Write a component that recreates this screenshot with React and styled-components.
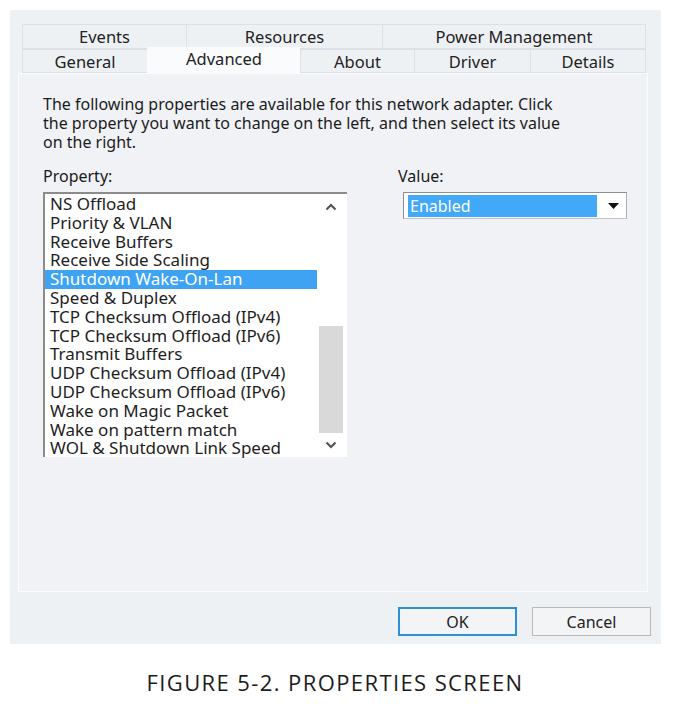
import React from "react";
import styled, { createGlobalStyle } from "styled-components";

const Global = createGlobalStyle`
  html, body { margin: 0; padding: 0; background: #ffffff; }
  body { font-family: "Noto Sans", "Open Sans", sans-serif; }
`;

const Page = styled.div`
  width: 673px;
  height: 709px;
  padding: 10px 12px 0 10px;
  box-sizing: border-box;
  display: flex;
  flex-direction: column;
`;

const Dialog = styled.div`
  width: 651px;
  height: 634px;
  background: #eef1f4;
  box-sizing: border-box;
  padding: 14px 13px 0 8px;
  display: flex;
  flex-direction: column;
  color: #1a1a1a;
  font-size: 16px;
`;

const Tabs = styled.div`
  margin: 0 2px 0 4px;
  display: grid;
  grid-template-rows: 25px 24px;
  position: relative;
  z-index: 1;
  font-size: 16.5px;
`;

const TabRow = styled.div`
  display: grid;
  grid-template-columns: ${(p) => p.$cols};
`;

const Tab = styled.div`
  display: flex;
  align-items: center;
  justify-content: center;
  border: 1px solid #dde1e5;
  border-right: none;
  background: ${(p) => (p.$active ? "#fafbfc" : "#eef1f4")};
  color: #222;
  box-sizing: border-box;
  padding-top: 1px;
  line-height: 20px;
  ${(p) =>
    p.$active
      ? `margin-top: -2px; height: calc(100% + 3px); border-color: #fafbfc; padding-top: 0; padding-bottom: 3px;`
      : ``}
  &:last-child { border-right: 1px solid #dde1e5; }
`;

const Panel = styled.div`
  height: 519px;
  background: #f0f2f5;
  border: 1px solid #fbfcfd;
  box-sizing: border-box;
  padding: 21px 20px 0 24px;
  display: flex;
  flex-direction: column;
`;

const Intro = styled.p`
  margin: 0;
  line-height: 19px;
  width: 535px;
  color: #1c1c1c;
`;

const Columns = styled.div`
  margin-top: 15px;
  display: grid;
  grid-template-columns: 304px 229px;
  column-gap: 51px;
`;

const Field = styled.div`
  display: flex;
  flex-direction: column;
`;

const Label = styled.div`
  line-height: 19px;
  margin-bottom: 6px;
`;

const ListBox = styled.div`
  height: 265px;
  background: #ffffff;
  border-top: 2px solid #8c8c8c;
  border-left: 2px solid #8c8c8c;
  box-sizing: border-box;
  display: flex;
  padding-top: 1px;
`;

const Items = styled.div`
  width: 272px;
  display: flex;
  flex-direction: column;
  font-size: 17px;
`;

const Item = styled.div`
  height: 18.8px;
  line-height: 18.8px;
  padding-left: 5px;
  white-space: nowrap;
  color: ${(p) => (p.$selected ? "#ffffff" : "#1e1e1e")};
  background: ${(p) => (p.$selected ? "#3fa3f4" : "transparent")};
`;

const ScrollBar = styled.div`
  width: 26px;
  margin-left: 1px;
  display: flex;
  flex-direction: column;
  align-items: center;
`;

const Arrow = styled.div`
  height: 24px;
  display: flex;
  align-items: center;
  justify-content: center;
  width: 100%;
`;

const Track = styled.div`
  flex: 1;
  width: 24px;
  display: flex;
  flex-direction: column;
  padding-top: 107px;
  box-sizing: border-box;
`;

const Thumb = styled.div`
  height: 107px;
  background: #d9d9d9;
`;

const Combo = styled.div`
  margin-left: 5px;
  height: 27px;
  border: 1px solid #8f8f8f;
  border-right-color: #b0b0b0;
  border-bottom-color: #c4c4c4;
  background: #ffffff;
  box-sizing: border-box;
  display: flex;
  padding: 2px 2px 1px 4px;
`;

const ComboValue = styled.div`
  width: 189px;
  background: #42a8f8;
  color: #ffffff;
  line-height: 22px;
  padding-left: 2px;
  box-sizing: border-box;
`;

const ComboButton = styled.div`
  flex: 1;
  display: flex;
  align-items: center;
  justify-content: center;
  padding-left: 5px;
`;

const Footer = styled.div`
  display: flex;
  justify-content: flex-end;
  gap: 15px;
  padding-top: 15px;
  margin-right: -3px;
`;

const Button = styled.div`
  width: 119px;
  height: 29px;
  box-sizing: border-box;
  display: flex;
  align-items: center;
  justify-content: center;
  background: #f3f4f5;
  color: #222;
  border: ${(p) => (p.$default ? "2px solid #2f8fd6" : "1px solid #b9b9b9")};
`;

const Caption = styled.div`
  margin-top: 23px;
  text-align: center;
  font-family: "Open Sans", sans-serif;
  font-size: 22px;
  color: #1c1c1c;
  letter-spacing: 1.4px;
  padding-right: 1px;
`;

const items = [
  "NS Offload",
  "Priority & VLAN",
  "Receive Buffers",
  "Receive Side Scaling",
  "Shutdown Wake-On-Lan",
  "Speed & Duplex",
  "TCP Checksum Offload (IPv4)",
  "TCP Checksum Offload (IPv6)",
  "Transmit Buffers",
  "UDP Checksum Offload (IPv4)",
  "UDP Checksum Offload (IPv6)",
  "Wake on Magic Packet",
  "Wake on pattern match",
  "WOL & Shutdown Link Speed",
];

const Chevron = ({ up }) => (
  <svg width="12" height="8" viewBox="0 0 12 8">
    <path
      d={up ? "M1.5 6.5 L6 2 L10.5 6.5" : "M1.5 1.5 L6 6 L10.5 1.5"}
      fill="none"
      stroke="#555"
      strokeWidth="2.2"
    />
  </svg>
);

export default function App() {
  return (
    <Page>
      <Global />
      <Dialog>
        <Tabs>
          <TabRow $cols="164px 196px 264px">
            <Tab>Events</Tab>
            <Tab>Resources</Tab>
            <Tab>Power Management</Tab>
          </TabRow>
          <TabRow $cols="125px 153px 114px 116px 116px">
            <Tab>General</Tab>
            <Tab $active>Advanced</Tab>
            <Tab>About</Tab>
            <Tab>Driver</Tab>
            <Tab>Details</Tab>
          </TabRow>
        </Tabs>
        <Panel>
          <Intro>
            The following properties are available for this network adapter. Click
            the property you want to change on the left, and then select its value
            on the right.
          </Intro>
          <Columns>
            <Field>
              <Label>Property:</Label>
              <ListBox>
                <Items>
                  {items.map((t) => (
                    <Item key={t} $selected={t === "Shutdown Wake-On-Lan"}>
                      {t}
                    </Item>
                  ))}
                </Items>
                <ScrollBar>
                  <Arrow>
                    <Chevron up />
                  </Arrow>
                  <Track>
                    <Thumb />
                  </Track>
                  <Arrow>
                    <Chevron />
                  </Arrow>
                </ScrollBar>
              </ListBox>
            </Field>
            <Field>
              <Label>Value:</Label>
              <Combo>
                <ComboValue>Enabled</ComboValue>
                <ComboButton>
                  <svg width="11" height="6" viewBox="0 0 11 6">
                    <path d="M0 0 H11 L5.5 6 Z" fill="#111" />
                  </svg>
                </ComboButton>
              </Combo>
            </Field>
          </Columns>
        </Panel>
        <Footer>
          <Button $default>OK</Button>
          <Button>Cancel</Button>
        </Footer>
      </Dialog>
      <Caption>FIGURE 5-2. PROPERTIES SCREEN</Caption>
    </Page>
  );
}
